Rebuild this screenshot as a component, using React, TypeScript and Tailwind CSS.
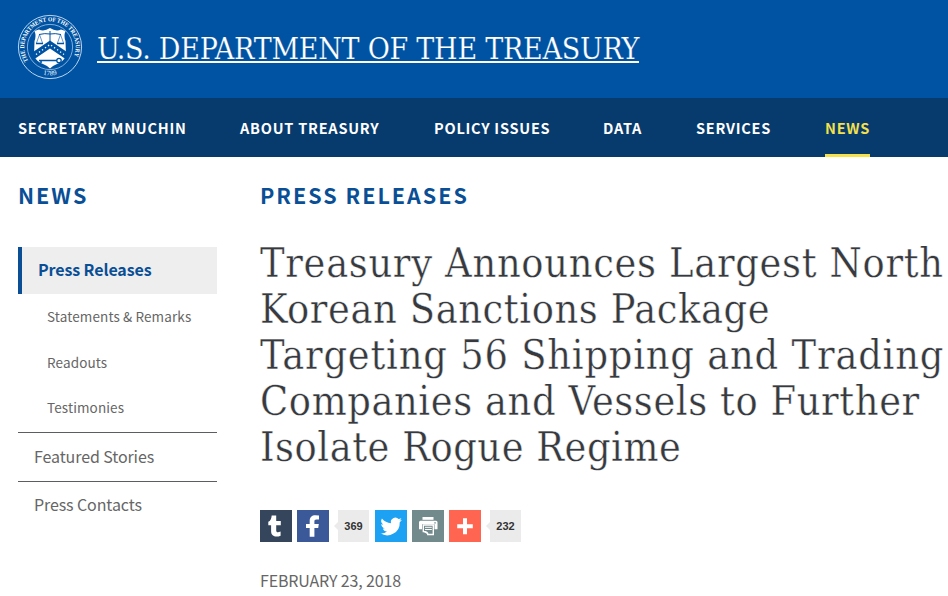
import { ReactNode } from "react";

const navItems = [
  { label: "SECRETARY MNUCHIN", width: "w-[222px]" },
  { label: "ABOUT TREASURY", width: "w-[194px]" },
  { label: "POLICY ISSUES", width: "w-[169px]" },
  { label: "DATA", width: "w-[93px]" },
  { label: "SERVICES", width: "w-[129px]" },
];

const headline = [
  { text: "Treasury Announces Largest North", tracking: "tracking-[0.69px]" },
  { text: "Korean Sanctions Package", tracking: "tracking-[0.6px]" },
  { text: "Targeting 56 Shipping and Trading", tracking: "tracking-[0.8px]" },
  { text: "Companies and Vessels to Further", tracking: "tracking-[0.6px]" },
  { text: "Isolate Rogue Regime", tracking: "tracking-[0.54px]" },
];

function Seal() {
  return (
    <svg viewBox="0 0 66 66" className="h-[66px] w-[66px] shrink-0 overflow-visible" fill="none">
      <circle cx="33" cy="33" r="31.6" stroke="#b9d5f0" strokeWidth="1" />
      <circle cx="33" cy="33" r="22.6" stroke="#b9d5f0" strokeWidth="0.7" />
      <defs>
        <path id="seal-top" d="M11.300 46.800 A25.700 25.700 0 1 1 54.700 46.800" />
        <path id="seal-bottom" d="M16 56 A29 29 0 0 0 50 56" />
      </defs>
      <text
        fill="#fff"
        fontSize="6.2"
        fontWeight="bold"
        fontFamily="'Liberation Serif', serif"
      >
        <textPath href="#seal-top" textLength="104" lengthAdjust="spacingAndGlyphs">
          THE DEPARTMENT OF THE TREASURY
        </textPath>
      </text>
      <text
        fill="#fff"
        fontSize="7"
        fontFamily="'Liberation Serif', serif"
      >
        <textPath href="#seal-bottom" startOffset="50%" textAnchor="middle">
          1789
        </textPath>
      </text>
      <path
        d="M17.500 17 L22 15.500 Q27 18 33 14 Q39 18 44 15.500 L48.500 17 Q46.500 22 48.500 27 L49 42 Q46 48 40 50 Q35.500 51.500 33 54.500 Q30.500 51.500 26 50 Q20 48 17 42 L17.500 27 Q19.500 22 17.500 17 Z"
        fill="#fff"
      />
      <path d="M16 38 L33 26.500 L50 38 V46 L33 34.500 L16 46 Z" fill="#0053a3" />
      <path
        d="M19 40.500 L33 30.500 L47 40.500"
        stroke="#fff"
        strokeWidth="1.300"
        strokeDasharray="1.300 2.400"
      />
      <g stroke="#0053a3" strokeWidth="1">
        <path d="M33 17 V28 M22 20.500 Q28 19 33 20 Q38 19 44 20.500" />
        <path d="M22.500 20.500 L19.500 29 M22.500 20.500 L25.500 29 M43.500 20.500 L40.500 29 M43.500 20.500 L46.500 29" strokeWidth="0.600" />
        <path d="M19 29.500 H26 M40 29.500 H47" strokeWidth="1.400" />
        <path d="M22 46.500 H40 M24 46.500 V49" strokeWidth="1.600" />
        <circle cx="42" cy="46.500" r="2.200" strokeWidth="1.300" />
      </g>
    </svg>
  );
}

function ShareButton({ color, children }: { color: string; children: ReactNode }) {
  return (
    <a className={`flex h-8 w-8 items-center justify-center ${color}`}>
      <svg viewBox="0 0 32 32" className="h-8 w-8" fill="#fff">
        {children}
      </svg>
    </a>
  );
}

function ShareCount({ value }: { value: string }) {
  return (
    <div className="flex items-center">
      <span className="h-0 w-0 border-y-[4px] border-r-[4px] border-y-transparent border-r-[#ebebeb]" />
      <span className="flex h-8 w-[31px] items-center justify-center bg-[#ebebeb] font-['Liberation_Sans',sans-serif] text-[11px] font-bold text-[#333]">
        {value}
      </span>
    </div>
  );
}

export default function App() {
  return (
    <div className="h-[596px] w-[948px] overflow-hidden bg-white font-['Noto_Sans_CJK_SC',sans-serif]">
      <header className="flex h-[98px] bg-[#0053a3] pt-[14px] pl-[17px]">
        <Seal />
        <a className="mt-[13px] ml-[14px] block h-9 w-[542px] border-b-2 border-white font-['DejaVu_Serif_Condensed','DejaVu_Serif',serif] text-[30px] leading-[44px] tracking-[-0.25px] whitespace-nowrap text-white [-webkit-text-stroke:0.2px_#0053a3]">
          U.S. DEPARTMENT OF THE TREASURY
        </a>
      </header>

      <nav className="flex h-[59px] bg-[#083b6d] pl-[18px] text-[14.5px] leading-[60px] font-bold tracking-[0.77px] whitespace-nowrap text-white">
        {navItems.map((item) => (
          <a key={item.label} className={item.width}>
            {item.label}
          </a>
        ))}
        <a className="h-[59px] w-[45px] border-b-[3px] border-[#f5e14c] text-[#f5e14c]">
          NEWS
        </a>
      </nav>

      <div className="flex">
        <aside className="ml-[18px] w-[199px] shrink-0 pt-[22px]">
          <h2 className="h-[68px] text-[21.5px] leading-[31px] font-bold tracking-[2px] text-[#0a4f96]">
            NEWS
          </h2>
          <a className="block h-[47px] border-l-4 border-[#0a4f96] bg-[#eee] pl-4 text-[16px] leading-[45px] font-bold tracking-[-0.1px] text-[#0a4f96]">
            Press Releases
          </a>
          <div className="flex h-[139px] flex-col border-b border-[#5b5d60] pl-[29px] text-[13.5px] leading-[45px] tracking-[0.12px] text-[#666]">
            <a className="h-[46px]">Statements &amp; Remarks</a>
            <a className="h-[45px]">Readouts</a>
            <a>Testimonies</a>
          </div>
          <a className="block h-[49px] border-b border-[#5b5d60] pl-4 text-[16px] leading-[46px] tracking-[-0.1px] text-[#666]">
            Featured Stories
          </a>
          <a className="block pl-4 text-[16px] leading-[45px] tracking-[-0.1px] text-[#666]">
            Press Contacts
          </a>
        </aside>

        <main className="ml-[43px] pt-[22px]">
          <h2 className="h-[61px] text-[21.5px] leading-[31px] font-bold tracking-[2px] text-[#0a4f96]">
            PRESS RELEASES
          </h2>
          <h1 className="font-['DejaVu_Serif_Condensed','DejaVu_Serif',serif] text-[41px] leading-[46px] font-normal whitespace-nowrap text-[#36393d] [-webkit-text-stroke:0.35px_white]">
            {headline.map((line) => (
              <span key={line.text} className={`block ${line.tracking}`}>
                {line.text}
              </span>
            ))}
          </h1>
          <div className="mt-10 flex">
            <div className="flex gap-[5px]">
              <ShareButton color="bg-[#35465c]">
                <path d="M11.700 5.500 h4.500 v5.500 h4.600 v4.300 h-4.600 v5 c0 2.300 1.700 2.500 4.400 1.300 v4.100 c-4.500 1.900-9.500.9-9.500-4.400 v-6 H8.300 v-3.600 c2.200-.8 3.100-2.700 3.400-6.200 Z" />
              </ShareButton>
              <ShareButton color="bg-[#3b5998]">
                <path d="M22 5.400 v4 h-2.500 c-1.700 0-2.100.8-2.100 2.100 v2.400 h4.400 l-.6 4 h-3.800 v8.800 h-4.700 v-8.800 H9 v-4 h3.700 v-3 c0-3.700 2.300-5.700 5.600-5.700 Z" />
              </ShareButton>
            </div>
            <div className="ml-[5px]">
              <ShareCount value="369" />
            </div>
            <div className="ml-[6px] flex gap-[5px]">
              <ShareButton color="bg-[#1da1f2]">
                <path
                  transform="translate(1.800 2) scale(.9)"
                  d="M28 8.600a10 10 0 0 1-2.800.8 5 5 0 0 0 2.100-2.700c-1 .5-2 1-3.100 1.200a4.900 4.900 0 0 0-8.400 4.500A14 14 0 0 1 5.700 7.300a4.900 4.900 0 0 0 1.500 6.600 5 5 0 0 1-2.200-.6v.1a4.900 4.900 0 0 0 3.900 4.800 5 5 0 0 1-2.200.1 4.900 4.900 0 0 0 4.600 3.400A9.900 9.900 0 0 1 4 23.700 14 14 0 0 0 25.500 11.300a10 10 0 0 0 2.500-2.700Z"
                />
              </ShareButton>
              <ShareButton color="bg-[#738a8d]">
                <path d="M10.500 7 h11 v2.800 h-11 Z" />
                <path d="M8.500 10.800 h15.500 q1.500 0 1.500 1.500 v7 h-3 v-5 H10 v5 H7 v-7 q0-1.500 1.500-1.500 Z" />
                <path
                  d="M11.300 15 h10 v9.500 h-5.500 q.3-3-4.500-3 Z"
                  fill="none"
                  stroke="#fff"
                  strokeWidth="1.400"
                />
                <path d="M11.300 21.500 q4.800 0 4.500 3 Z" />
                <path d="M13 17.300 h6.800 M13 19.500 h6.800" stroke="#fff" strokeWidth="1" />
                <path d="M22.300 12.300 h1.500 v1.200 h-1.500 Z" fill="#738a8d" />
              </ShareButton>
              <ShareButton color="bg-[#ff6550]">
                <path d="M14 8.200 h4 v6 h5.800 v4 h-5.800 v6 h-4 v-6 H8.200 v-4 H14 Z" />
              </ShareButton>
            </div>
            <div className="ml-[5px]">
              <ShareCount value="232" />
            </div>
          </div>
          <div className="mt-[26px] text-[16px] leading-6 tracking-[-0.15px] whitespace-nowrap text-[#666]">
            FEBRUARY 23, 2018
          </div>
        </main>
      </div>
    </div>
  );
}
